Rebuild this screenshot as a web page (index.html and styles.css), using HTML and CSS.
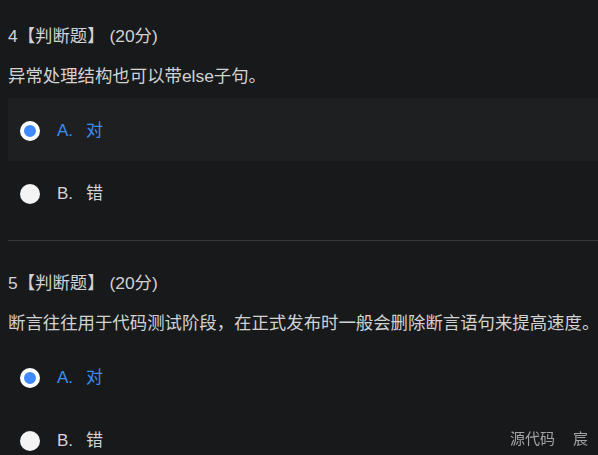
FILE: index.html
```html
<!DOCTYPE html>
<html lang="zh-CN">
<head>
<meta charset="utf-8">
<link rel="stylesheet" href="styles.css">
</head>
<body>
<div class="page">
  <section class="question">
    <div class="q-title">4【判断题】 (20分)</div>
    <div class="q-text">异常处理结构也可以带else子句。</div>
    <ul class="options">
      <li class="option selected"><span class="radio"></span><span class="opt-text"><span class="label">A.</span>对</span></li>
      <li class="option"><span class="radio"></span><span class="opt-text"><span class="label">B.</span>错</span></li>
    </ul>
  </section>
  <hr class="divider">
  <section class="question">
    <div class="q-title">5【判断题】 (20分)</div>
    <div class="q-text">断言往往用于代码测试阶段，在正式发布时一般会删除断言语句来提高速度。</div>
    <ul class="options">
      <li class="option plain-selected"><span class="radio"></span><span class="opt-text"><span class="label">A.</span>对</span></li>
      <li class="option"><span class="radio"></span><span class="opt-text"><span class="label">B.</span>错</span></li>
    </ul>
  </section>
</div>
<div class="watermark"><span>源代码</span><span>宸</span></div>
</body>
</html>
```
FILE: styles.css
```css
html, body {
  margin: 0;
  padding: 0;
  background: #18191b;
  overflow: hidden;
}
body {
  font-family: "Liberation Sans", "Noto Sans CJK SC", sans-serif;
  color: #d2d2d2;
  font-size: 17.4px;
}
.page {
  margin-left: 8px;
  padding-top: 24px;
  width: 600px;
}
.question {
  display: flex;
  flex-direction: column;
}
.q-title {
  line-height: 24px;
  height: 24px;
}
.q-text {
  margin-top: 16px;
  line-height: 24px;
  height: 24px;
  white-space: nowrap;
}
.options {
  list-style: none;
  margin: 10px 0 0 0;
  padding: 0;
}
.option {
  height: 63px;
  box-sizing: border-box;
  padding-top: 3px;
  display: flex;
  align-items: center;
  padding-left: 12px;
  font-size: 17px;
  color: #d4d4d4;
}
.option.selected {
  background: #1e1f21;
}
.opt-text {
  line-height: 24px;
}
.radio {
  width: 20px;
  height: 20px;
  border-radius: 50%;
  background: #f4f4f4;
  box-sizing: border-box;
  margin-right: 17px;
  flex: none;
}
.selected .radio, .plain-selected .radio {
  background: #4089ff;
  border: 4px solid #ffffff;
}
.selected, .plain-selected {
  color: #3a8ef2;
}
.label {
  display: inline-block;
  width: 29px;
}
.divider {
  border: none;
  height: 1px;
  background: #353638;
  margin: 16px 0 30px 0;
}
.watermark {
  position: fixed;
  right: 10px;
  bottom: 7px;
  display: flex;
  gap: 18px;
  font-size: 15px;
  line-height: 20px;
  color: #a3a3a3;
  font-family: "Noto Sans CJK SC", sans-serif;
}
```
